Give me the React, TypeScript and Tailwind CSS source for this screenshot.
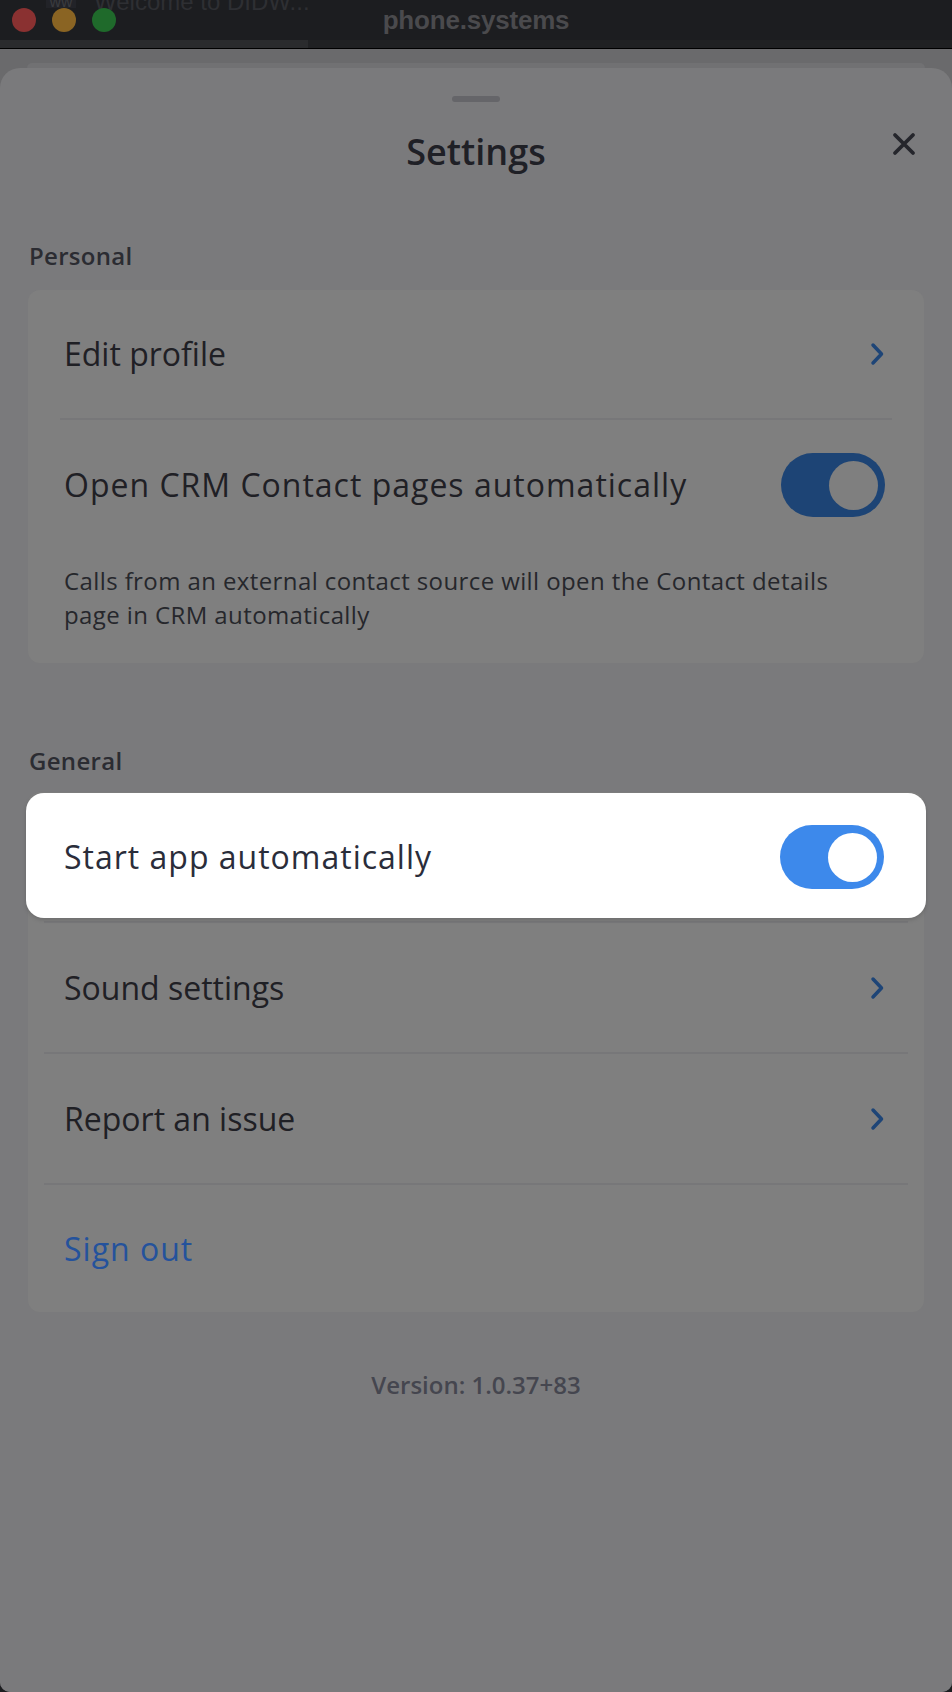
import React from 'react';

function Chevron() {
  return (
    <svg width="16" height="24" viewBox="0 0 16 24" fill="none" className="shrink-0">
      <path d="M4 3 L12.5 12 L4 21" stroke="#1e4577" strokeWidth="3.5" strokeLinecap="round" strokeLinejoin="round" />
    </svg>
  );
}

function Toggle({ bright }: { bright?: boolean }) {
  return (
    <div
      className={`w-[104px] h-[64px] shrink-0 rounded-full flex items-center justify-end pr-[7px] ${
        bright ? 'bg-[#3d89eb]' : 'bg-[#1d4475]'
      }`}
    >
      <div className={`w-[49px] h-[49px] rounded-full ${bright ? 'bg-white' : 'bg-[#7f7f7f]'}`} />
    </div>
  );
}

export default function App() {
  return (
    <div className="w-[952px] h-[1692px] bg-[#1c1d20] overflow-hidden flex flex-col font-['Open_Sans',sans-serif]">
      {/* Window title bar */}
      <div className="relative h-[40px] shrink-0 grid grid-cols-[1fr_auto_1fr] items-center overflow-hidden">
        {/* faint window behind */}
        <div className="absolute left-[46px] -top-[12px] w-[30px] h-[20px] bg-[#222328] text-[#3a3b3f] text-[16px] leading-[28px] font-['Liberation_Sans',sans-serif] text-center">
          ww
        </div>
        <div className="absolute left-[94px] -top-[12px] text-[#2e2f33] text-[24px] leading-[28px] font-['Liberation_Sans',sans-serif]">
          Welcome to DIDW...
        </div>
        <div className="relative flex items-center gap-[16px] pl-[12px]">
          <div className="w-[24px] h-[24px] rounded-full bg-[#8a3131]" />
          <div className="w-[24px] h-[24px] rounded-full bg-[#8a6423]" />
          <div className="w-[24px] h-[24px] rounded-full bg-[#1f6a2b]" />
        </div>
        <div className="relative text-[26px] font-bold text-[#4a4a4d] font-['Liberation_Sans',sans-serif] tracking-[-0.2px]">
          phone.systems
        </div>
        <div />
      </div>
      <div className="h-[8px] shrink-0 flex">
        <div className="w-[308px] bg-[#2a2b2d]" />
        <div className="flex-1 bg-[#202123]" />
      </div>
      <div className="h-[1px] shrink-0 bg-black" />

      {/* Dimmed app area */}
      <div className="flex-1 bg-[#6a6a6c] pt-[14px] flex flex-col rounded-b-[10px] overflow-hidden">
        <div className="mx-[27px] h-[5px] shrink-0 bg-[#717173] rounded-t-[16px]" />
        <div className="flex-1 bg-[#7a7a7c] rounded-t-[20px] px-[28px] flex flex-col">
          {/* Handle */}
          <div className="mt-[28px] mx-auto w-[48px] h-[6px] rounded-full bg-[#656569]" />

          {/* Header */}
          <div className="mt-[26px] grid grid-cols-[1fr_auto_1fr] h-[48px]">
            <div />
            <h1 className="text-[36px] leading-[48px] font-semibold text-[#1f2026]">Settings</h1>
            <div className="flex justify-end pr-[8px] pt-[4px]">
              <svg width="24" height="24" viewBox="0 0 24 24" fill="none">
                <path d="M3 3 L21 21 M21 3 L3 21" stroke="#25262c" strokeWidth="3.8" strokeLinecap="round" />
              </svg>
            </div>
          </div>

          {/* Personal */}
          <div className="mt-[64px] text-[24px] leading-[32px] font-semibold text-[#2b2c32] pl-[1px] tracking-[0.3px]">Personal</div>
          <div className="mt-[18px] bg-[#7f7f7f] rounded-[12px]">
            <div className="h-[128px] flex items-center justify-between pl-[36px] pr-[39px]">
              <span className="text-[32px] text-[#1f2025]">Edit profile</span>
              <Chevron />
            </div>
            <div className="mx-8 h-[2px] bg-[#777779]" />
            <div className="h-[130px] flex items-center justify-between pl-[36px] pr-[39px]">
              <span className="text-[32px] text-[#1f2025] tracking-[1px]">Open CRM Contact pages automatically</span>
              <Toggle />
            </div>
            <p className="mt-[14px] pb-[32px] pl-[36px] pr-[50px] text-[24px] leading-[33.6px] text-[#26272c] tracking-[0.4px]">
              Calls from an external contact source will open the Contact details page in CRM automatically
            </p>
          </div>

          {/* General */}
          <div className="mt-[82px] text-[24px] leading-[32px] font-semibold text-[#2b2c32] pl-[1px] tracking-[0.3px]">General</div>
          <div className="relative mt-[15px] bg-[#7f7f7f] rounded-[12px]">
            <div className="h-[129px] flex items-center justify-between pl-[36px] pr-[39px]">
              <span className="text-[32px] text-[#1f2025] tracking-[1px]">Start app automatically</span>
              <Toggle />
            </div>
            <div className="mx-4 h-[2px] bg-[#777779]" />
            <div className="h-[129px] flex items-center justify-between pl-[36px] pr-[39px]">
              <span className="text-[32px] text-[#1f2025]">Sound settings</span>
              <Chevron />
            </div>
            <div className="mx-4 h-[2px] bg-[#777779]" />
            <div className="h-[129px] flex items-center justify-between pl-[36px] pr-[39px]">
              <span className="text-[32px] text-[#1f2025]">Report an issue</span>
              <Chevron />
            </div>
            <div className="mx-4 h-[2px] bg-[#777779]" />
            <div className="h-[127px] flex items-center pl-[36px] pr-[39px]">
              <span className="text-[32px] text-[#24529c] tracking-[1px]">Sign out</span>
            </div>

            {/* Highlighted row lifted above the overlay */}
            <div className="absolute -left-[2px] -right-[2px] top-[1px] h-[125px] bg-white rounded-[18px] shadow-[0_2px_4px_rgba(0,0,0,0.15)] flex items-center justify-between pt-[3px] pl-[38px] pr-[42px]">
              <span className="text-[32px] text-[#2a2d3a] tracking-[1px]">Start app automatically</span>
              <Toggle bright />
            </div>
          </div>

          {/* Version */}
          <div className="mt-[57px] text-center text-[24px] leading-[32px] font-semibold text-[#45464f]">
            Version: 1.0.37+83
          </div>
        </div>
      </div>
    </div>
  );
}
